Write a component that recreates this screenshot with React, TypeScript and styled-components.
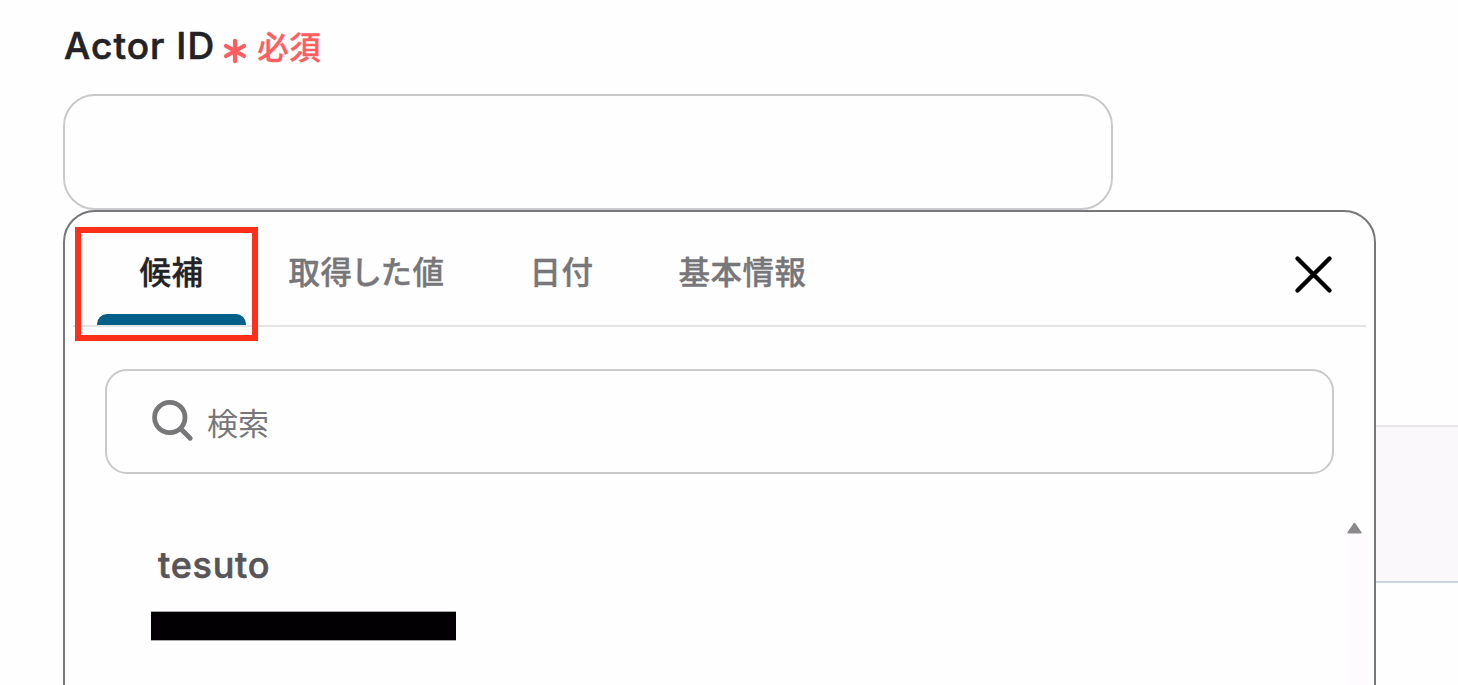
import { useState } from 'react'
import styled, { createGlobalStyle } from 'styled-components'

const GlobalStyle = createGlobalStyle`
  * {
    box-sizing: border-box;
  }
  body {
    margin: 0;
    background: #fefefe;
    overflow: hidden;
    font-family: Inter, "Noto Sans CJK JP", sans-serif;
  }
`;

const Page = styled.main`
  position: relative;
  height: 685px;
  padding: 22px 0 0 63px;
  overflow: hidden;
`;

const Label = styled.label`
  display: flex;
  align-items: center;
  height: 46px;
  padding-left: 1px;
  color: #232226;
  font-size: 37px;
  font-weight: 500;
  letter-spacing: 1.05px;
  white-space: nowrap;
  -webkit-text-stroke: 0.6px currentColor;
`;

const Required = styled.span`
  display: flex;
  align-items: center;
  gap: 10px;
  margin-left: 8px;
  color: #ff5d5f;
  font-size: 31.5px;
  font-weight: 500;
  letter-spacing: 0.5px;
  -webkit-text-stroke: 0.35px currentColor;

  svg {
    margin-top: 11px;
  }
`;

const ActorInput = styled.input`
  display: block;
  width: 1050px;
  height: 116px;
  margin-top: 26px;
  padding: 0 40px;
  border: 2px solid #cac9cb;
  border-radius: 32px;
  background: #fefefe;
  font: inherit;
  font-size: 32px;
  outline: none;
`;

// The strip of the page that shows beside the open panel
const BackRow = styled.div`
  position: absolute;
  top: 425px;
  right: 0;
  width: 120px;
  height: 158px;
  border-top: 2px solid #e6e4e7;
  border-bottom: 2px solid #cbd3dd;
  background: #faf8fb;
`;

const Panel = styled.section`
  position: relative;
  width: 1313px;
  height: 520px;
  padding: 0 8px;
  border: 2px solid #777679;
  border-radius: 32px 32px 0 0;
  background: #fefefe;
`;

const TabBar = styled.div`
  display: flex;
  height: 115px;
  padding-left: 24px;
  border-bottom: 2px solid #e4e3e5;
`;

const Tab = styled.button<{ $active?: boolean }>`
  display: flex;
  flex-direction: column;
  align-items: center;
  justify-content: space-between;
  padding: 34px 42.5px 0;
  border: 0;
  background: none;
  color: ${(props) => (props.$active ? '#232226' : '#777679')};
  font-family: "Noto Sans CJK JP", sans-serif;
  font-size: 31.5px;
  font-weight: 500;
  letter-spacing: 0.5px;
  line-height: 48px;
  white-space: nowrap;
  -webkit-text-stroke: 0.35px currentColor;

  &::after {
    content: "";
    width: 149px;
    height: 11px;
    margin: 0 -42.5px;
    border-radius: 10px 10px 0 0;
    background: ${(props) => (props.$active ? '#006088' : 'transparent')};
  }
`;

const Kana = styled.span`
  margin: 0 2px 0 -2px;
  letter-spacing: -1.5px;
`;

const CloseButton = styled.button`
  display: flex;
  margin: 43px 33px 0 auto;
  padding: 0;
  width: 39px;
  height: 39px;
  border: 0;
  background: none;
`;

const SearchBox = styled.div`
  display: flex;
  align-items: center;
  width: 1229px;
  height: 105px;
  margin: 42px 0 0 32px;
  padding-left: 44px;
  border: 2px solid #cac9cb;
  border-radius: 22px;

  svg {
    margin-top: -2px;
  }
`;

const SearchInput = styled.input`
  flex: 1;
  margin-left: 12px;
  padding: 0;
  border: 0;
  background: none;
  outline: none;
  font-family: "Noto Sans CJK JP", sans-serif;
  font-size: 31px;

  &::placeholder {
    color: #777679;
    opacity: 1;
  }
`;

const ListArea = styled.div`
  display: flex;
  justify-content: space-between;
  height: 180px;
  margin-top: 43px;
`;

const Candidate = styled.div`
  padding: 25px 0 0 78px;
`;

const CandidateName = styled.div`
  padding-left: 7px;
  color: #575558;
  font-size: 36px;
  font-weight: 500;
  line-height: 46px;
  letter-spacing: 0.75px;
  -webkit-text-stroke: 0.6px currentColor;
`;

const Redacted = styled.div`
  width: 305px;
  height: 30px;
  margin-top: 23px;
  border: solid #aaa9ab;
  border-width: 1px 0;
  background: #020002;
`;

const Scrollbar = styled.div`
  width: 20px;
  margin-right: -2px;
  padding-top: 5px;

  svg {
    display: block;
    margin-left: -1px;
  }
`;

const Track = styled.div`
  height: 170px;
  background: #fdfbfe;
`;

const Highlight = styled.div`
  position: absolute;
  top: 15px;
  left: 10px;
  width: 183px;
  height: 114px;
  border: 6px solid #ff2f1c;
  pointer-events: none;
`;

const tabs = ['候補', '取得した値', '日付', '基本情報'];

function TabLabel({ text }: { text: string }) {
  // hiragana is set a little tighter than kanji
  return (
    <span>
      {text.split(/([ぁ-ん]+)/).map((part, i) =>
        i % 2 ? <Kana key={i}>{part}</Kana> : part
      )}
    </span>
  );
}

export default function App() {
  const [active, setActive] = useState(0);

  return (
    <Page>
      <GlobalStyle />
      <BackRow />
      <Label htmlFor="actor">
        Actor ID
        <Required>
          <svg width="24" height="26" viewBox="0 0 24 26" fill="none" stroke="currentColor" strokeWidth="4.2" strokeLinecap="round">
            <path d="M12 2.8v20.4M3 8l18 10M21 8L3 18" />
          </svg>
          必須
        </Required>
      </Label>
      <ActorInput id="actor" />
      <Panel>
        <TabBar>
          {tabs.map((tab, i) => (
            <Tab key={tab} $active={i === active} onClick={() => setActive(i)}>
              <TabLabel text={tab} />
            </Tab>
          ))}
          <CloseButton aria-label="閉じる">
            <svg width="39" height="39" viewBox="0 0 39 39" fill="none" stroke="#000" strokeWidth="4.4" strokeLinecap="round">
              <path d="M3.5 3.5l32 32M35.5 3.5l-32 32" />
            </svg>
          </CloseButton>
        </TabBar>
        <SearchBox>
          <svg width="44" height="44" viewBox="0 0 44 44" fill="none" stroke="#777679" strokeWidth="4.8" strokeLinecap="round">
            <circle cx="18.8" cy="18.5" r="15.2" />
            <path d="M30 30l9.2 9.2" />
          </svg>
          <SearchInput placeholder="検索" />
        </SearchBox>
        <ListArea>
          <Candidate>
            <CandidateName>tesuto</CandidateName>
            <Redacted />
          </Candidate>
          <Scrollbar>
            <svg width="15" height="12" viewBox="0 0 15 12" fill="#8c898c" stroke="#8c898c" strokeWidth="2" strokeLinejoin="round">
              <path d="M7.5 1.8L13.6 10.5H1.4Z" />
            </svg>
            <Track />
          </Scrollbar>
        </ListArea>
        <Highlight />
      </Panel>
    </Page>
  )
}
